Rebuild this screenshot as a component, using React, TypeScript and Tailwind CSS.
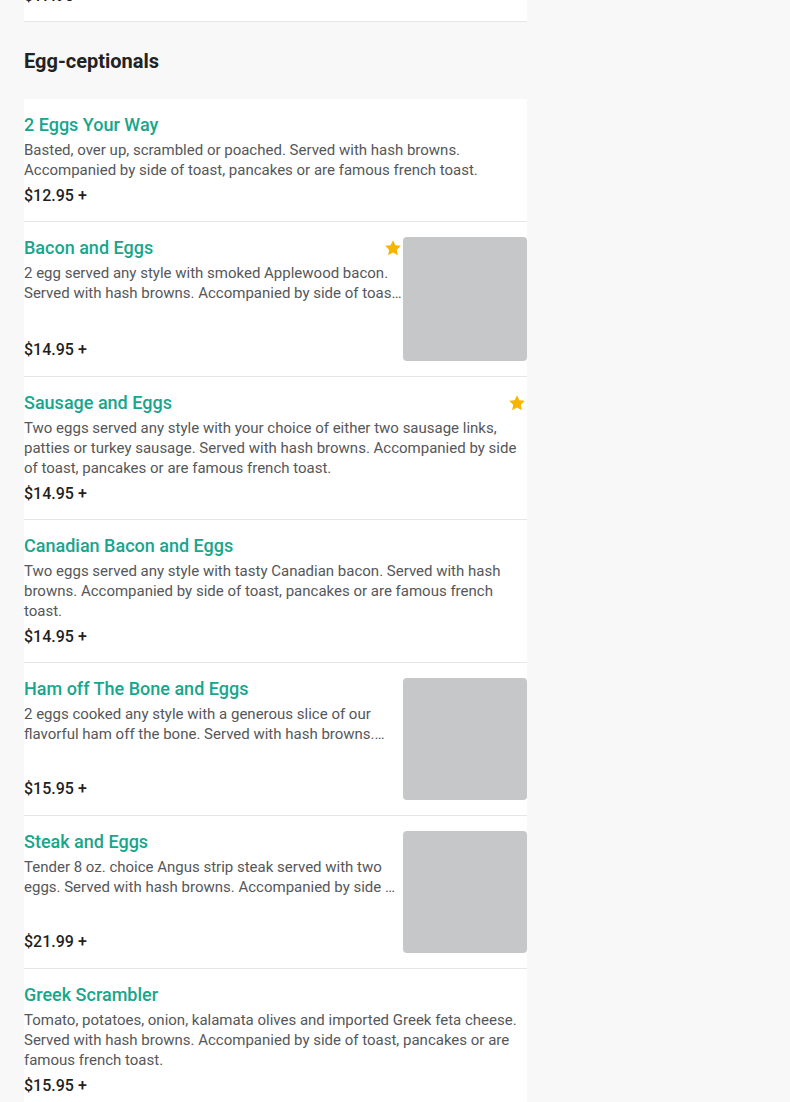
import React from 'react';

type Item = {
  name: string;
  desc: string;
  price: string;
  image?: 'tall' | 'short';
  star?: boolean;
};

const items: Item[] = [
  {
    name: '2 Eggs Your Way',
    desc: 'Basted, over up, scrambled or poached. Served with hash browns. Accompanied by side of toast, pancakes or are famous french toast.',
    price: '$12.95 +',
  },
  {
    name: 'Bacon and Eggs',
    desc: '2 egg served any style with smoked Applewood bacon. Served with hash browns. Accompanied by side of toast, pancakes or are famous french toast.',
    price: '$14.95 +',
    image: 'tall',
    star: true,
  },
  {
    name: 'Sausage and Eggs',
    desc: 'Two eggs served any style with your choice of either two sausage links, patties or turkey sausage. Served with hash browns. Accompanied by side of toast, pancakes or are famous french toast.',
    price: '$14.95 +',
    star: true,
  },
  {
    name: 'Canadian Bacon and Eggs',
    desc: 'Two eggs served any style with tasty Canadian bacon. Served with hash browns. Accompanied by side of toast, pancakes or are famous french toast.',
    price: '$14.95 +',
  },
  {
    name: 'Ham off The Bone and Eggs',
    desc: '2 eggs cooked any style with a generous slice of our flavorful ham off the bone. Served with hash browns. Accompanied by side of toast, pancakes or are famous french toast.',
    price: '$15.95 +',
    image: 'short',
  },
  {
    name: 'Steak and Eggs',
    desc: 'Tender 8 oz. choice Angus strip steak served with two eggs. Served with hash browns. Accompanied by side of toast, pancakes or are famous french toast.',
    price: '$21.99 +',
    image: 'short',
  },
  {
    name: 'Greek Scrambler',
    desc: 'Tomato, potatoes, onion, kalamata olives and imported Greek feta cheese. Served with hash browns. Accompanied by side of toast, pancakes or are famous french toast.',
    price: '$15.95 +',
  },
];

const Star = () => (
  <span className="w-5 h-5 flex items-center justify-center shrink-0 mt-[1px]">
    <svg width="18" height="18" viewBox="0 0 24 24">
      <path
        fill="#f7b500"
        d="M12 1.5l3.2 6.7 7.3.9-5.4 5.1 1.4 7.3L12 18l-6.5 3.5 1.4-7.3-5.4-5.1 7.3-.9z"
      />
    </svg>
  </span>
);

const MenuItem = ({ item }: { item: Item }) => (
  <div className="bg-white border-b border-[#e6e6e6] py-[15px] flex">
    <div className={`flex-1 min-w-0 flex flex-col ${item.image ? 'justify-between' : ''}`}>
      <div>
        <div className="flex items-start justify-between h-[22px]">
          <span className="text-[18px] leading-[22px] font-medium text-[#17a68c]">{item.name}</span>
          {item.star && <Star />}
        </div>
        <p className={`mt-[4px] text-[15px] leading-[20px] text-[#555759] ${item.image ? 'line-clamp-2' : ''}`}>
          {item.desc}
        </p>
      </div>
      <div className={`text-[16px] leading-[20px] font-medium text-[#1f1f1f] ${item.image ? 'mb-[1px]' : 'mt-[6px]'}`}>
        {item.price}
      </div>
    </div>
    {item.image && (
      <div
        className={`w-[124px] shrink-0 rounded-[4px] bg-[#c6c7c9] ${item.image === 'tall' ? 'h-[124px]' : 'h-[122px]'}`}
      />
    )}
  </div>
);

export default function App() {
  return (
    <div
      className="min-h-screen bg-[#f8f8f8] overflow-hidden"
      style={{ fontFamily: 'Roboto, "Noto Sans", sans-serif' }}
    >
      <div className="ml-6 w-[503px]">
        <div className="bg-white border-b border-[#e6e6e6] pb-[15px] -mt-[14px]">
          <div className="text-[16px] leading-[20px] font-medium text-[#1f1f1f]">$17.95 +</div>
        </div>
        <h2 className="pt-[25px] pb-[24px] text-[20px] leading-[28px] font-bold text-[#222]">Egg-ceptionals</h2>
        {items.map((it) => (
          <MenuItem key={it.name} item={it} />
        ))}
      </div>
    </div>
  );
}
